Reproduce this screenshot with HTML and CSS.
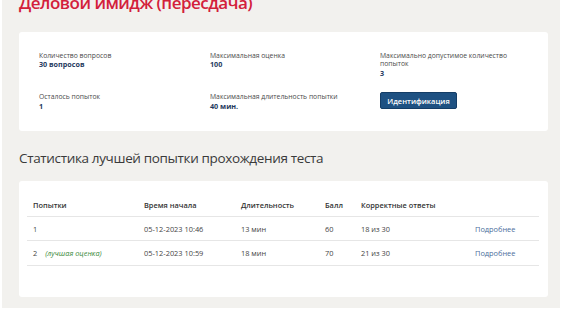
FILE: index.html
```html
<!DOCTYPE html>
<html lang="ru">
<head>
  <meta charset="UTF-8" />
  <meta name="viewport" content="width=device-width, initial-scale=1.0"/>
  <title>Деловой имидж (пересдача)</title>
  <link rel="stylesheet" href="styles.css">
</head>
<body>
  <div class="page">
    <h1 class="title">Деловой имидж (пересдача)</h1>

    <div class="card info">
      <div class="info-item">
        <div class="label">Количество вопросов</div>
        <div class="value">30 вопросов</div>
      </div>
      <div class="info-item">
        <div class="label">Максимальная оценка</div>
        <div class="value">100</div>
      </div>
      <div class="info-item">
        <div class="label narrow">Максимально допустимое количество попыток</div>
        <div class="value">3</div>
      </div>
      <div class="info-item">
        <div class="label">Осталось попыток</div>
        <div class="value">1</div>
      </div>
      <div class="info-item">
        <div class="label">Максимальная длительность попытки</div>
        <div class="value">40 мин.</div>
      </div>
      <div class="info-item">
        <button class="btn">Идентификация</button>
      </div>
    </div>

    <h2 class="section-title">Статистика лучшей попытки прохождения теста</h2>

    <div class="card stats">
      <table>
        <colgroup>
          <col class="c-try">
          <col class="c-start">
          <col class="c-dur">
          <col class="c-score">
          <col class="c-correct">
          <col>
        </colgroup>
        <thead>
          <tr>
            <th>Попытки</th>
            <th>Время начала</th>
            <th>Длительность</th>
            <th>Балл</th>
            <th>Корректные ответы</th>
            <th></th>
          </tr>
        </thead>
        <tbody>
          <tr>
            <td>1</td>
            <td>05-12-2023 10:46</td>
            <td>13 мин</td>
            <td>60</td>
            <td>18 из 30</td>
            <td><a href="#">Подробнее</a></td>
          </tr>
          <tr>
            <td>2 <span class="best">(лучшая оценка)</span></td>
            <td>05-12-2023 10:59</td>
            <td>18 мин</td>
            <td>70</td>
            <td>21 из 30</td>
            <td><a href="#">Подробнее</a></td>
          </tr>
        </tbody>
      </table>
    </div>
  </div>
</body>
</html>
```

FILE: styles.css
```css
* {
  box-sizing: border-box;
}

body {
  margin: 0;
  padding: 0;
  font-family: "Open Sans", "Liberation Sans", sans-serif;
  background: #ffffff;
  color: #333333;
  overflow: hidden;
}

.page {
  width: 558px;
  margin-left: 2px;
  padding: 0 12px 11px 17px;
  background: #f2f1ee;
}

.title {
  margin: -8px 0 0;
  font-size: 17px;
  line-height: 22px;
  font-weight: 600;
  letter-spacing: -0.5px;
  color: #d3203b;
}

.card {
  background: #ffffff;
  border-radius: 3px;
}

.info {
  margin-top: 18px;
  padding: 20px 20px 21px 20px;
  display: grid;
  grid-template-columns: 171px 170px 1fr;
  row-gap: 16px;
}

.info-item {
  font-size: 6.8px;
  line-height: 8.4px;
}

.label {
  color: #4a4a4a;
}

.label.narrow {
  max-width: 128px;
}

.value {
  color: #1f3a60;
  font-weight: 700;
  font-size: 7.2px;
}

.btn {
  margin-top: -1px;
  width: 77px;
  height: 17px;
  padding: 0;
  border: 1px solid #143d66;
  border-radius: 2px;
  background: #1e5182;
  color: #ffffff;
  font-family: inherit;
  font-size: 7.5px;
  font-weight: 600;
}

.section-title {
  margin: 17px 0 0;
  font-size: 13.5px;
  line-height: 20px;
  font-weight: 400;
  letter-spacing: -0.35px;
  color: #3a3a3a;
}

.stats {
  margin-top: 13px;
  padding: 11px 9px 31px 8px;
}

table {
  width: 100%;
  border-collapse: collapse;
  table-layout: fixed;
  font-size: 7.4px;
  line-height: 8.5px;
}

.c-try { width: 111px; }
.c-start { width: 97px; }
.c-dur { width: 84px; }
.c-score { width: 36px; }
.c-correct { width: 114px; }

th,
td {
  text-align: left;
  padding: 8px 6px 7px;
  border-bottom: 1px solid #e6e6e6;
  white-space: nowrap;
}

th {
  padding-top: 9px;
  padding-bottom: 6px;
  font-weight: 600;
  color: #333333;
}

td {
  color: #444444;
}

.best {
  margin-left: 6px;
  font-style: italic;
  color: #3b8a3b;
}

a {
  color: #4a6d9c;
  text-decoration: none;
}
```
